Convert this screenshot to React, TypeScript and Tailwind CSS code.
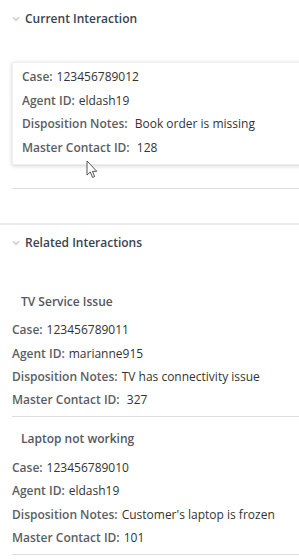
import React from "react";

function Chevron() {
  return (
    <svg width="8" height="6" viewBox="0 0 8 6" className="shrink-0">
      <path d="M0.8 1.2 L4 4.4 L7.2 1.2" fill="none" stroke="#c0c4ca" strokeWidth="1.1" />
    </svg>
  );
}

function Row({ label, value, h }: { label: string; value: string; h: string }) {
  return (
    <div className={`flex items-center whitespace-pre ${h}`}>
      <span className="font-semibold text-[#5b5e63]">{label}</span>
      <span className="ml-[4px] text-[#333]">{value}</span>
    </div>
  );
}

function Header({ title }: { title: string }) {
  return (
    <div className="flex items-center h-[20px] pl-[12px]">
      <Chevron />
      <span className="ml-[5px] font-semibold text-[#3a4350] text-[12px]">{title}</span>
    </div>
  );
}

function Group({
  title,
  rows,
}: {
  title: string;
  rows: [string, string][];
}) {
  return (
    <div>
      <div className="flex items-center h-[20px] pl-[21px] font-semibold text-[#55585c]">{title}</div>
      <div className="mt-[7px] pl-[12px]">
        {rows.map(([l, v]) => (
          <Row key={l} label={l} value={v} h="h-[23.3px]" />
        ))}
      </div>
      <div className="mt-[4.5px] ml-[12px] border-t border-[#dedede]" />
    </div>
  );
}

export default function App() {
  return (
    <div className="relative w-[299px] h-[560px] overflow-hidden bg-white text-[12px] font-['Open_Sans',sans-serif]">
      <div className="pt-[9px]">
        <Header title="Current Interaction" />
        <div className="mt-[33px] ml-[12px] w-[300px] pt-[2px] pb-[4px] pl-[9px] bg-white border border-[#eeeeee] shadow-[0_1px_4px_rgba(0,0,0,0.18)]">
          <Row label="Case:" value="123456789012" h="h-[23.7px]" />
          <Row label="Agent ID:" value="eldash19" h="h-[23.7px]" />
          <Row label="Disposition Notes:" value=" Book order is missing" h="h-[23.7px]" />
          <Row label="Master Contact ID:" value=" 128" h="h-[23.7px]" />
        </div>
        <div className="mt-[23px] ml-[12px] border-t border-[#dedede]" />
      </div>
      <div className="mt-[34px] h-[2px] bg-[#ececec]" />
      <div className="mt-[8px]">
        <Header title="Related Interactions" />
      </div>
      <div className="mt-[39px]">
        <Group
          title="TV Service Issue"
          rows={[
            ["Case:", "123456789011"],
            ["Agent ID:", "marianne915"],
            ["Disposition Notes:", "TV has connectivity issue"],
            ["Master Contact ID:", " 327"],
          ]}
        />
      </div>
      <div className="mt-[12px]">
        <Group
          title="Laptop not working"
          rows={[
            ["Case:", "123456789010"],
            ["Agent ID:", "eldash19"],
            ["Disposition Notes:", "Customer's laptop is frozen"],
            ["Master Contact ID:", "101"],
          ]}
        />
      </div>
      <svg className="absolute left-[86px] top-[160px]" width="12" height="19" viewBox="0 0 12 19">
        <path
          d="M1 1 L1 15 L4.3 12 L6.6 17.4 L8.6 16.5 L6.4 11.3 L10.8 11.3 Z"
          fill="#ffffff"
          stroke="#555"
          strokeWidth="1"
          strokeLinejoin="round"
        />
      </svg>
    </div>
  );
}
